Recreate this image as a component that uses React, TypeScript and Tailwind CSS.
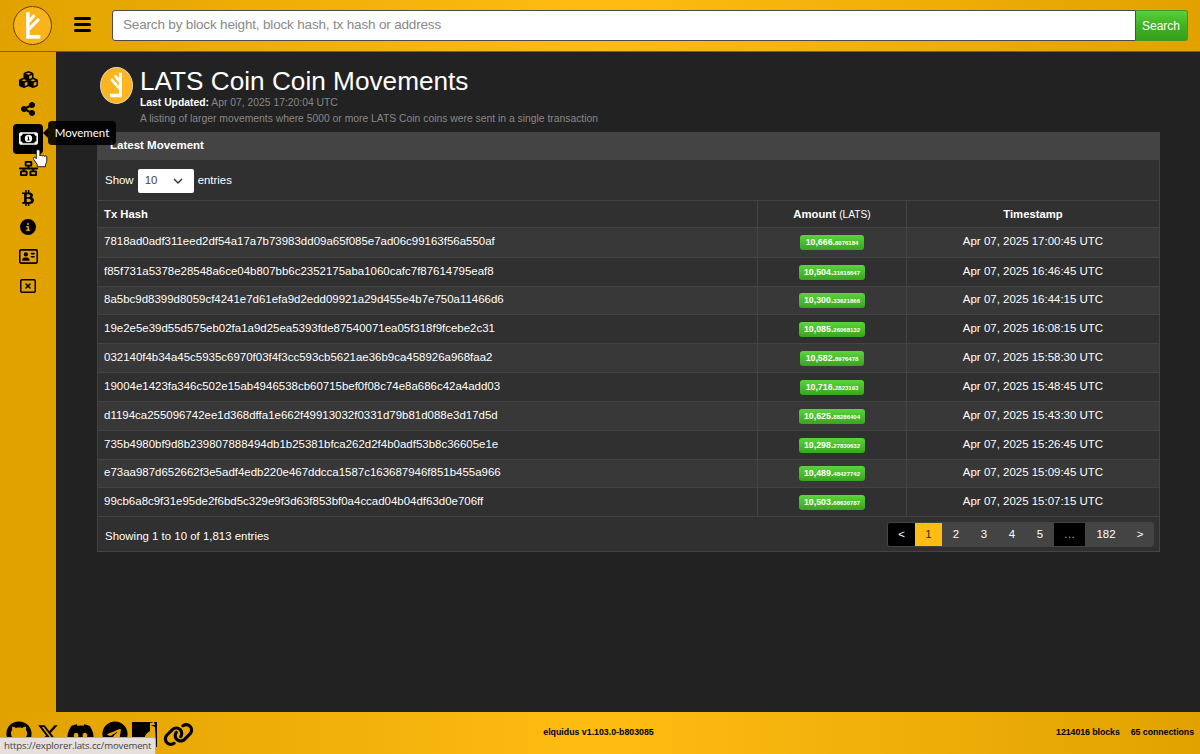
import type { ReactNode } from "react";
import {
  FaBtc,
  FaCircleInfo,
  FaCubes,
  FaDiscord,
  FaGithub,
  FaLink,
  FaNetworkWired,
  FaRegAddressCard,
  FaRegMoneyBill1,
  FaRegRectangleXmark,
  FaShareNodes,
  FaTelegram,
  FaXTwitter,
} from "react-icons/fa6";

type Movement = {
  hash: string;
  whole: string;
  decimals: string;
  time: string;
  height: string;
};

const movements: Movement[] = [
  { hash: "7818ad0adf311eed2df54a17a7b73983dd09a65f085e7ad06c99163f56a550af", whole: "10,666", decimals: "8076184", time: "17:00:45", height: "h-[30px]" },
  { hash: "f85f731a5378e28548a6ce04b807bb6c2352175aba1060cafc7f87614795eaf8", whole: "10,504", decimals: "31616647", time: "16:46:45", height: "h-[29px]" },
  { hash: "8a5bc9d8399d8059cf4241e7d61efa9d2edd09921a29d455e4b7e750a11466d6", whole: "10,300", decimals: "33621866", time: "16:44:15", height: "h-[28px]" },
  { hash: "19e2e5e39d55d575eb02fa1a9d25ea5393fde87540071ea05f318f9fcebe2c31", whole: "10,085", decimals: "26068132", time: "16:08:15", height: "h-[29px]" },
  { hash: "032140f4b34a45c5935c6970f03f4f3cc593cb5621ae36b9ca458926a968faa2", whole: "10,582", decimals: "8976478", time: "15:58:30", height: "h-[29px]" },
  { hash: "19004e1423fa346c502e15ab4946538cb60715bef0f08c74e8a686c42a4add03", whole: "10,716", decimals: "2823193", time: "15:48:45", height: "h-[29px]" },
  { hash: "d1194ca255096742ee1d368dffa1e662f49913032f0331d79b81d088e3d17d5d", whole: "10,625", decimals: "88286404", time: "15:43:30", height: "h-[29px]" },
  { hash: "735b4980bf9d8b239807888494db1b25381bfca262d2f4b0adf53b8c36605e1e", whole: "10,298", decimals: "27830632", time: "15:26:45", height: "h-[29px]" },
  { hash: "e73aa987d652662f3e5adf4edb220e467ddcca1587c163687946f851b455a966", whole: "10,489", decimals: "48427742", time: "15:09:45", height: "h-[28px]" },
  { hash: "99cb6a8c9f31e95de2f6bd5c329e9f3d63f853bf0a4ccad04b04df63d0e706ff", whole: "10,503", decimals: "68630787", time: "15:07:15", height: "h-[29px]" },
];

const CoinMark = ({ className }: { className?: string }) => (
  <svg viewBox="0 0 40 40" className={className} fill="none" stroke="#fff" preserveAspectRatio="none">
    <path d="M15 5.5V31.4H28.5" strokeWidth="3.8" />
    <path d="M16 15.5 22 8.5M16 23.5 27 12.5" strokeWidth="3.3" />
  </svg>
);

const Header = () => (
  <header className="flex h-[52px] shrink-0 items-center border-b border-[#7b622a] bg-linear-to-r from-[#e1a200] via-[#ffbc12] to-[#e1a200] pr-3 pl-[13px]">
    <div className="flex size-[39px] items-center justify-center rounded-full border border-[#5c4309] bg-[#fbb31c]">
      <CoinMark className="size-[38px]" />
    </div>
    <button className="mb-[2px] ml-[22px] flex w-[17px] flex-col gap-[3.5px]" aria-label="Toggle menu">
      <span className="h-[2.5px] w-full rounded-full bg-black" />
      <span className="h-[2.5px] w-full rounded-full bg-black" />
      <span className="h-[2.5px] w-full rounded-full bg-black" />
    </button>
    <div className="ml-[21px] flex h-[31px] flex-1">
      <input
        className="h-full min-w-0 flex-1 rounded-l-[3px] border border-[#4b4a50] bg-white px-[10px] pb-[2px] text-[13.5px] tracking-[-0.17px] placeholder:text-[#898989] focus:outline-none"
        placeholder="Search by block height, block hash, tx hash or address"
      />
      <button className="h-full w-[52px] rounded-r-[3px] border border-l-0 border-[#3c9d20] bg-linear-to-b from-[#58cf39] via-[#40b222] to-[#379f1c] pr-px text-[12px] text-white">
        Search
      </button>
    </div>
  </header>
);

const Tooltip = ({ children }: { children: ReactNode }) => (
  <div className="absolute top-[-3px] left-[30px] z-20 flex items-center">
    <span className="h-0 w-0 border-y-[5px] border-r-[5px] border-y-transparent border-r-black" />
    <span className="flex h-[24px] w-[68px] items-center justify-center rounded bg-black/90 font-['Lato'] text-[11.5px] text-white">
      {children}
    </span>
  </div>
);

const HandCursor = () => (
  <svg viewBox="0 0 16 20" className="absolute top-[24px] left-[20px] z-30 h-[20px] w-[15px]">
    <path
      d="M5 1.2c-.9 0-1.5.7-1.5 1.5v8.1L2.4 9.6c-.7-.6-1.7-.5-2 .2-.2.6 0 1.2.4 1.8l3.7 5.2v2.5h8.8v-2.4c.9-1.3 1.4-2.7 1.4-4.4V8.8c0-1.5-2-1.6-2.3-.4-.1-1.5-2.2-1.6-2.5-.3-.2-1.5-2.3-1.5-2.5-.2V2.7c0-.8-.6-1.5-1.500-1.500Z"
      fill="#fff"
      stroke="#111"
      strokeWidth="1"
    />
  </svg>
);

const navIcons = [FaCubes, FaShareNodes, FaRegMoneyBill1, FaNetworkWired, FaBtc, FaCircleInfo, FaRegAddressCard, FaRegRectangleXmark];

const Sidebar = () => (
  <nav className="flex w-14 shrink-0 flex-col items-center bg-[#e1a200] pt-[13px]">
    {navIcons.map((Icon, i) => (
      <a key={i} className="relative flex h-[29.5px] w-[30px] items-center justify-center">
        {i === 2 ? (
          <>
            <span className="flex size-[30px] shrink-0 items-center justify-center rounded bg-black text-white">
              <Icon className="size-[19px]" />
            </span>
            <Tooltip>Movement</Tooltip>
            <HandCursor />
          </>
        ) : (
          <Icon className={i === 0 || i === 3 || i === 6 ? "size-[19px]" : "size-[16px]"} />
        )}
      </a>
    ))}
  </nav>
);

const MovementTable = () => (
  <table className="w-full table-fixed border-collapse text-[11.48px]">
    <colgroup>
      <col className="w-[659.5px]" />
      <col className="w-[149px]" />
      <col />
    </colgroup>
    <thead>
      <tr className="h-[27px] border-y border-[#434343] text-[11.3px]">
        <th className="border-r border-[#434343] py-0 pl-[6px] text-left font-bold">Tx Hash</th>
        <th className="border-r border-[#434343] p-0 font-bold">
          Amount <span className="text-[10.2px] font-normal">(LATS)</span>
        </th>
        <th className="p-0 font-bold">Timestamp</th>
      </tr>
    </thead>
    <tbody>
      {movements.map((m) => (
        <tr key={m.hash} className={`${m.height} border-b border-[#434343] odd:bg-[#383838]`}>
          <td className="border-r border-[#434343] pt-0 pb-px pl-[6px]">{m.hash}</td>
          <td className="border-r border-[#434343] p-0 text-center">
            <span className="inline-flex h-[15px] items-baseline rounded-[3px] bg-linear-to-b from-[#5ad43c] to-[#38a51e] px-[5.300px] align-middle text-[8.800px] leading-[14px] font-bold">
              {m.whole}.<span className="text-[6px]">{m.decimals}</span>
            </span>
          </td>
          <td className="pt-0 pb-px text-center">Apr 07, 2025 {m.time} UTC</td>
        </tr>
      ))}
    </tbody>
  </table>
);

const pages = [
  { label: "<", style: "w-[27px] bg-black" },
  { label: "1", style: "w-[27px] bg-[#ffbc12] text-[#332600]" },
  { label: "2", style: "w-[28px] bg-[#444]" },
  { label: "3", style: "w-[28px] bg-[#444]" },
  { label: "4", style: "w-[28px] bg-[#444]" },
  { label: "5", style: "w-[28px] bg-[#444]" },
  { label: "…", style: "w-[31px] bg-black text-[#aaa]" },
  { label: "182", style: "w-[42px] bg-[#444]" },
  { label: ">", style: "w-[26px] bg-[#444]" },
];

const Pagination = () => (
  <div className="mt-px flex h-[25px] overflow-hidden rounded-[3px] border border-[#444]">
    {pages.map((page) => (
      <button key={page.label} className={`flex h-full items-center justify-center pt-px ${page.style}`}>
        {page.label}
      </button>
    ))}
  </div>
);

const Footer = () => (
  <footer className="relative flex h-[42px] shrink-0 items-center justify-between overflow-hidden bg-linear-to-r from-[#e1a200] via-[#ffbc12] to-[#e1a200] pr-[6px] pl-[6px] text-[8.8px] font-bold">
    <div className="flex w-[297px] items-center gap-[6.5px] pt-[2px]">
      <FaGithub className="size-[26px]" />
      <FaXTwitter className="-ml-[2px] size-[23px]" />
      <FaDiscord className="size-[29px]" />
      <FaTelegram className="size-[26px]" />
      <svg viewBox="0 0 25 25" className="-ml-[2px] size-[25px]">
        <path d="M0 0H25V25H0Z" />
        <path d="M18 1 22 0 23 3 19 3 23 5 24 20 12 20C12 13 15 11 18 9Z" fill="#e6a606" />
      </svg>
      <FaLink className="-ml-px size-[31px]" />
    </div>
    <span>elquidus v1.103.0-b803085</span>
    <div className="flex w-[300px] justify-end gap-[11px] tracking-[-0.06px]">
      <span>1214016 blocks</span>
      <span>65 connections</span>
    </div>
    <span className="absolute bottom-0 left-0 flex h-[17px] w-[156px] items-center rounded-tr-[3px] border-t border-r border-[#b9b0a8] bg-[#e6dfdc] pl-[4px] font-['Open_Sans'] text-[9.6px] font-normal tracking-[-0.15px] text-[#444]">
      https://explorer.lats.cc/movement
    </span>
  </footer>
);

const App = () => (
  <div className="flex h-screen flex-col overflow-hidden bg-[#222] font-['Liberation_Sans',sans-serif] text-black">
    <Header />
    <div className="flex min-h-0 flex-1">
      <Sidebar />
      <main className="flex-1 pt-[13px] pr-10 pl-[41px] text-white">
        <div className="flex h-[67px] pl-[3px]">
          <div className="mt-[2px] flex h-[37px] w-[33px] items-center justify-center rounded-[50%] border border-[#ddd3bd] bg-[#fdb51f]">
            <CoinMark className="h-[35px] w-[32px] -scale-x-100" />
          </div>
          <div className="ml-[7px]">
            <h1 className="text-[26.2px] leading-[32px]">LATS Coin Coin Movements</h1>
            <p className="text-[10.35px] leading-[11px] text-[#888]">
              <b className="text-white">Last Updated:</b> Apr 07, 2025 17:20:04 UTC
            </p>
            <p className="mt-[4px] text-[10.35px] leading-[14px] text-[#888]">
              A listing of larger movements where 5000 or more LATS Coin coins were sent in a single transaction
            </p>
          </div>
        </div>
        <section className="border border-t-0 border-[#434343] bg-[#303030] text-[11.45px]">
          <h2 className="flex h-[28px] items-center bg-[#444] pl-[12px] text-[11.5px] font-bold">Latest Movement</h2>
          <div className="flex h-[40px] items-center gap-1 pt-[2px] pl-[7px]">
            Show
            <span className="flex h-[24px] w-[56px] items-center justify-between rounded-[2px] bg-white pr-[11px] pl-[7px] text-[#444]">
              10
              <svg viewBox="0 0 10 6" className="h-[6px] w-[10px]" fill="none" stroke="#333" strokeWidth="1.4">
                <path d="m1 1 4 4 4-4" />
              </svg>
            </span>
            entries
          </div>
          <MovementTable />
          <div className="flex h-[34px] items-center justify-between pr-[5px] pl-[7px]">
            <span className="pt-[5px]">Showing 1 to 10 of 1,813 entries</span>
            <Pagination />
          </div>
        </section>
      </main>
    </div>
    <Footer />
  </div>
);

export default App;
